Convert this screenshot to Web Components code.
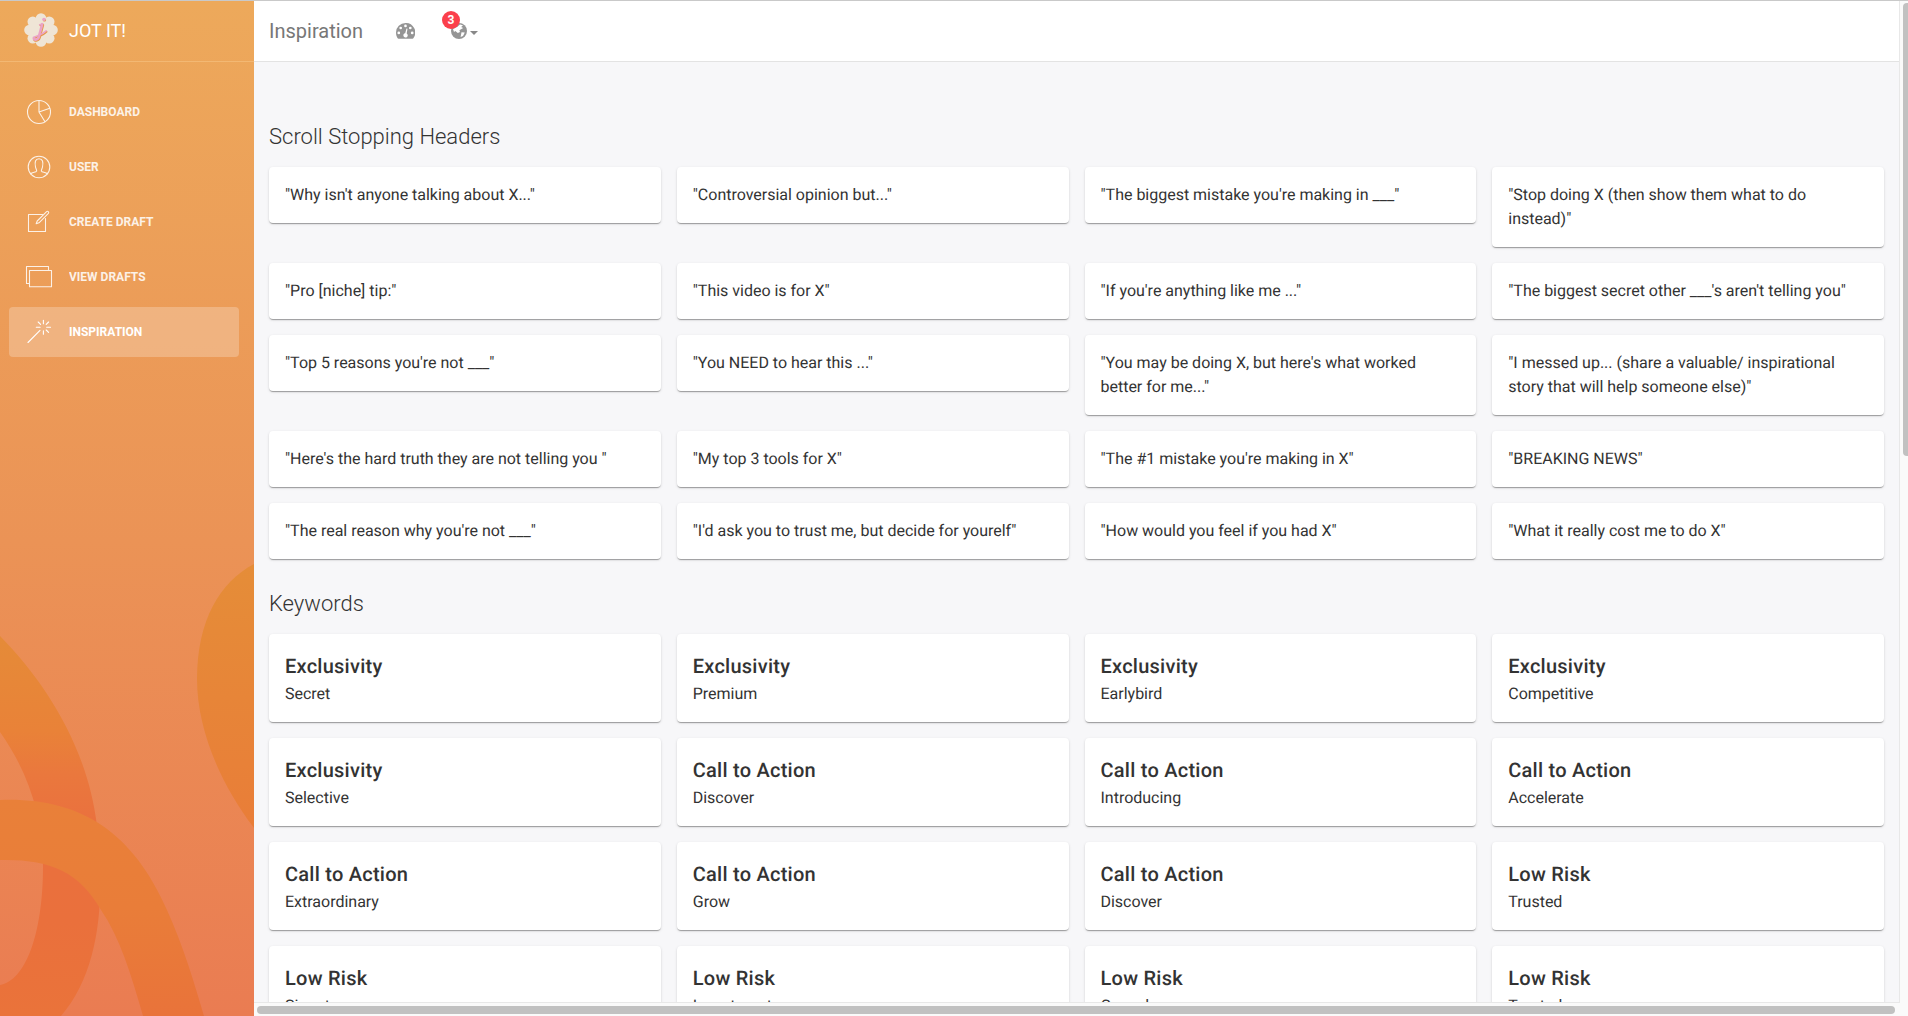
<!DOCTYPE html>
<html lang="en">
<head>
<meta charset="utf-8">
<title>Jot It! – Inspiration</title>
<style>
html,body{margin:0;height:100%;overflow:hidden}
body{font-family:Roboto,sans-serif;background:#f7f7f8;color:#333}
</style>
</head>
<body>
<jot-app>
  <jot-sidebar slot="side">
    <jot-nav icon="pie">Dashboard</jot-nav>
    <jot-nav icon="user">User</jot-nav>
    <jot-nav icon="note">Create Draft</jot-nav>
    <jot-nav icon="album">View Drafts</jot-nav>
    <jot-nav icon="wand" active>Inspiration</jot-nav>
  </jot-sidebar>
  <jot-topbar slot="top" count="3">Inspiration</jot-topbar>
  <jot-section id="headers" heading="Scroll Stopping Headers"></jot-section>
  <jot-section id="keywords" heading="Keywords"></jot-section>
</jot-app>
<script>
const data = {
  headers: [
    '"Why isn\'t anyone talking about X..."', '"Controversial opinion but..."', '"The biggest mistake you\'re making in ___"', '"Stop doing X (then show them what to do instead)"',
    '"Pro [niche] tip:"', '"This video is for X"', '"If you\'re anything like me ..."', '"The biggest secret other ___\'s aren\'t telling you"',
    '"Top 5 reasons you\'re not ___"', '"You NEED to hear this ..."', '"You may be doing X, but here\'s what worked better for me..."', '"I messed up... (share a valuable/ inspirational story that will help someone else)"',
    '"Here\'s the hard truth they are not telling you "', '"My top 3 tools for X"', '"The #1 mistake you\'re making in X"', '"BREAKING NEWS"',
    '"The real reason why you\'re not ___"', '"I\'d ask you to trust me, but decide for yourelf"', '"How would you feel if you had X"', '"What it really cost me to do X"'
  ].map(text => [text]),
  keywords: [
    ['Secret', 'Exclusivity'], ['Premium', 'Exclusivity'], ['Earlybird', 'Exclusivity'], ['Competitive', 'Exclusivity'],
    ['Selective', 'Exclusivity'], ['Discover', 'Call to Action'], ['Introducing', 'Call to Action'], ['Accelerate', 'Call to Action'],
    ['Extraordinary', 'Call to Action'], ['Grow', 'Call to Action'], ['Discover', 'Call to Action'], ['Trusted', 'Low Risk'],
    ['Signature', 'Low Risk'], ['Investment', 'Low Risk'], ['Cancel', 'Low Risk'], ['Trusted', 'Low Risk']
  ]
};

const define = (name, html, setup) => customElements.define(name, class extends HTMLElement {
  constructor() {
    super();
    this.attachShadow({ mode: 'open' });
  }
  connectedCallback() {
    this.shadowRoot.innerHTML = html;
    if (setup) setup(this, this.shadowRoot);
  }
});

define('jot-app', `
<style>
:host{display:flex;flex-direction:column;height:100vh;width:100vw;box-sizing:border-box;border-top:1px solid #c9c9c9;overflow:hidden}
.row{display:flex;flex:1;min-height:0}
.view{flex:1;min-width:0;display:flex;flex-direction:column}
.upper{flex:1;min-height:0;display:flex}
.page{flex:1;min-width:0;display:flex;flex-direction:column;overflow:hidden}
main{flex:1;min-height:0;overflow:hidden;padding:56px 15px 0;background:#f7f7f9;display:flex;flex-direction:column;gap:26px}
.vs{flex:none;width:8px;border-left:1px solid #e8e8e8;background:#fafafa;overflow:hidden}
.vs i{display:block;margin:2px 0 0 3px;width:8px;height:453px;border-radius:4px;background:#c1c1c1}
.hs{flex:none;height:13px;border-top:1px solid #e8e8e8;background:#fafafa;margin-right:8px}
.hs i{display:block;margin:3px 5px 0 3px;height:8px;border-radius:4px;background:#c1c1c1}
.bottom{background:#fafafa}
</style>
<div class="row"><slot name="side"></slot>
<div class="view"><div class="upper"><div class="page"><slot name="top"></slot><main><slot></slot></main></div><div class="vs"><i></i></div></div>
<div class="bottom"><div class="hs"><i></i></div></div></div></div>`);

define('jot-sidebar', `
<style>
:host{display:block;flex:none;width:254px;position:relative;overflow:hidden;background:linear-gradient(#eda95b 0,#eb9356 540px,#ea7c52 1015px)}
.art{position:absolute;left:0;bottom:0;width:254px;height:476px;display:block}
.inner{position:relative}
.brand{height:60px;border-bottom:1px solid #f3b873;display:flex;align-items:center;padding-left:24px;gap:11px;color:#fff;font-size:18px;line-height:30px}
.brand svg{display:block;width:34px;height:34px;margin-top:-2px}
nav{display:flex;flex-direction:column;gap:5px;padding:25px 15px 0 9px}
</style>
<svg class="art" viewBox="0 0 254 476">
<defs>
<linearGradient id="a" x1="0" y1="96" x2="0" y2="476" gradientUnits="userSpaceOnUse"><stop offset="0" stop-color="#e58b38"/><stop offset=".25" stop-color="#e98238"/><stop offset=".36" stop-color="#ea783d"/><stop offset=".5" stop-color="#ea703e"/><stop offset=".75" stop-color="#ea703c"/><stop offset="1" stop-color="#ea733a"/></linearGradient>
<linearGradient id="b" x1="0" y1="260" x2="0" y2="476" gradientUnits="userSpaceOnUse"><stop offset="0" stop-color="#e98039"/><stop offset=".5" stop-color="#e97d39"/><stop offset="1" stop-color="#e9733a"/></linearGradient>
<linearGradient id="c" x1="0" y1="24" x2="0" y2="290" gradientUnits="userSpaceOnUse"><stop offset="0" stop-color="#e58d38"/><stop offset="1" stop-color="#e97d38"/></linearGradient>
</defs>
<path fill="url(#a)" d="M0 96C48 145 88 210 97 286C105 356 101 430 61 476H0V445C25 441 43 395 43 326C43 275 27 230 0 192Z"/>
<path fill="url(#b)" d="M0 260C78 257 132 290 167 370C184 408 194 442 204 476H143C131 434 120 398 101 370C79 331 49 319 0 320Z"/>
<path fill="url(#c)" d="M254 24C220 42 197 80 197 139C197 190 221 245 254 288Z"/>
</svg>
<div class="inner">
<div class="brand">
<svg viewBox="0 0 34 34"><g fill="#efe5d6"><circle cx="17" cy="17" r="12"/><circle cx="17" cy="5.500" r="5.300"/><circle cx="25.200" cy="8.800" r="5.300"/><circle cx="28.500" cy="17" r="5.300"/><circle cx="25.200" cy="25.200" r="5.300"/><circle cx="17" cy="28.500" r="5.300"/><circle cx="8.800" cy="25.200" r="5.300"/><circle cx="5.500" cy="17" r="5.300"/><circle cx="8.800" cy="8.800" r="5.300"/></g>
<g fill="none" stroke-linecap="round" stroke-linejoin="round"><g stroke="#e6964a"><path stroke-width="2.400" d="M16.600 12.200L19 12L15.600 24.800C14.600 28.400 9.800 28.200 10.200 25.800"/><path stroke-width="1.500" d="M10.200 25.600C11 23.600 18 24 22.800 18.800"/><path stroke-width="3" d="M20.300 7h.3"/></g><g stroke="#eba3c6"><path stroke-width="2.600" d="M18.200 11.200L14.800 24C13.800 27.400 9.400 27.200 9.800 24.900"/><path stroke-width="1.500" d="M15.600 11.700L18 11.200M9.900 24.800C10.700 22.800 17 23.200 22.200 17.800"/><path stroke-width="3.200" d="M19.800 6.300h.3"/></g></g></svg>
<span>JOT IT!</span></div>
<nav><slot></slot></nav>
</div>`);

const icons = {
  pie: '<circle cx="14" cy="14" r="11.500"/><path d="M14 2.500V14L20 23.700M14 14L24.800 10.200"/>',
  user: '<circle cx="14" cy="14" r="10.800"/><path d="M5.600 20.800C7 19.300 11 19.200 11.600 18.200C12 17.200 10.900 15.800 10.500 14C9.500 9 10.300 5.700 14 5.700S18.500 9 17.500 14C17.100 15.800 16 17.200 16.400 18.200C17 19.200 21 19.300 22.400 20.800"/>',
  note: '<path d="M17.500 6.500H3.500V23.500H20.500V10.500M12.200 13L21.600 3.600Q22.500 2.900 23.300 3.700T23.400 5.400L14 14.800L11.200 15.800Z"/>',
  album: '<path d="M4.500 20.500H1.500V3.500H23.500V7.300"/><rect x="4.500" y="7.500" width="22" height="16.300"/>',
  wand: '<path d="M3 24.500L15 12.300M18.400 2.200v3.500M18.400 12.700v3.500M11.300 9.200h3.800M21.700 9.200h3.800M13.200 4l2.400 2.400M23.600 4L21.200 6.400M23.600 14.400L21.200 12"/>'
};
define('jot-nav', `
<style>
:host{display:flex;align-items:center;height:50px;padding-left:16px;gap:16px;border-radius:4px;color:#fff;font-size:12px;font-weight:700;line-height:30px;text-transform:uppercase}
:host([active]){background:rgba(255,255,255,.24)}
svg{width:28px;height:28px;fill:none;stroke:#fff;stroke-width:1.100;stroke-linejoin:round;stroke-linecap:round}
svg,span{opacity:.86}
:host([active]) svg,:host([active]) span{opacity:1}
</style><svg viewBox="0 0 28 28"></svg><span><slot></slot></span>`,
(el, root) => { root.querySelector('svg').innerHTML = icons[el.getAttribute('icon')]; });

define('jot-topbar', `
<style>
:host{display:flex;align-items:center;height:60px;flex:none;background:#fff;border-bottom:1px solid #e3e3e3;padding-left:15px;color:#777}
h1{margin:0;font-size:20px;font-weight:400;line-height:30px}
svg{display:block}
.gauge{margin-left:33px}
.bell{position:relative;display:flex;align-items:center;margin-left:36px}
.badge{position:absolute;left:-9px;top:-12px;width:18px;height:18px;border-radius:9px;background:#fb404b;color:#fff;font-size:12px;font-weight:700;line-height:18px;text-align:center}
.caret{margin:3px 0 0 3px;border:4px solid transparent;border-top-color:#888;border-bottom:0}
</style>
<h1><slot></slot></h1>
<svg class="gauge" width="19" height="16" viewBox="0 0 19 16"><path fill="#959595" d="M9.500 0A9.500 9.500 0 0 0 0 9.500C0 11.500.5 13.400 1.500 15Q1.800 15.700 2.500 15.700H16.500Q17.200 15.700 17.500 15A9.500 9.500 0 0 0 9.500 0Z"/><g fill="#fff"><circle cx="2.800" cy="9.900" r="1.350"/><circle cx="4.700" cy="5" r="1.350"/><circle cx="9.500" cy="2.900" r="1.350"/><circle cx="14.300" cy="5" r="1.350"/><circle cx="16.200" cy="9.900" r="1.350"/><path d="M10.500 5.500L11.500 5.800L10.700 10.500A2.200 2.200 0 1 1 9.200 10.200Z"/></g></svg>
<div class="bell">
<svg width="16" height="16" viewBox="0 0 16 16"><circle cx="8" cy="8" r="8" fill="#959595"/><path fill="#fff" d="M9 1.500L12 2.300L10.200 4L12.200 5L9.600 6.600L8.400 7.200L9 9L6.800 10L4.300 8L3 9L2 6L6 4ZM10.500 9.200L13.800 9.600L12 13L9.600 14Z"/></svg>
<span class="badge"></span><span class="caret"></span></div>`,
(el, root) => { root.querySelector('.badge').textContent = el.getAttribute('count'); });

define('jot-card', `
<style>
:host{display:block;box-sizing:border-box;padding:16px;background:#fff;border-radius:4px;color:#333;text-rendering:geometricPrecision;font-size:16px;line-height:24px;letter-spacing:-.01px;box-shadow:0 2px 1px -1px rgba(0,0,0,.2),0 1px 1px 0 rgba(0,0,0,.14),0 1px 3px 0 rgba(0,0,0,.12)}
h3{margin:0;font-size:20px;font-weight:500;line-height:32px;letter-spacing:.25px}
</style><slot></slot>`,
(el, root) => {
  if (!el.hasAttribute('heading')) return;
  const h = document.createElement('h3');
  h.textContent = el.getAttribute('heading');
  root.insertBefore(h, root.querySelector('slot'));
});

define('jot-section', `
<style>
:host{display:block;flex:none}
h2{margin:0 0 12px;font-size:22px;font-weight:300;line-height:37px;color:#333}
.grid{display:grid;grid-template-columns:repeat(4,minmax(0,1fr));gap:16px;align-items:start}
</style><h2></h2><div class="grid"></div>`,
(el, root) => {
  root.querySelector('h2').textContent = el.getAttribute('heading');
  const grid = root.querySelector('.grid');
  for (const [text, title] of data[el.id]) {
    const card = document.createElement('jot-card');
    if (title) card.setAttribute('heading', title);
    card.textContent = text;
    grid.append(card);
  }
});
</script>
</body>
</html>
